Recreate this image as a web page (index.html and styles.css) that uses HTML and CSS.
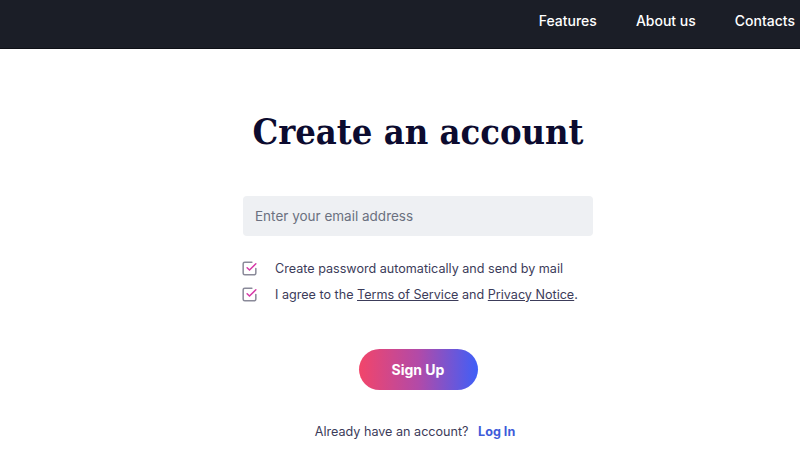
FILE: index.html
```html
<!DOCTYPE html>
<html lang="en">
<head>
<meta charset="utf-8">
<title>Create an account</title>
<link rel="stylesheet" href="styles.css">
</head>
<body>
<header class="nav">
  <a class="nav-link" href="#">Features</a>
  <a class="nav-link" href="#">About us</a>
  <a class="nav-link" href="#">Contacts</a>
</header>
<main class="main">
  <h1 class="title">Create an account</h1>
  <form class="form">
    <input class="email" type="email" placeholder="Enter your email address">
    <ul class="checks">
      <li class="check">
        <svg class="check-icon" viewBox="0 0 24 24" width="19" height="19" fill="none" stroke-linecap="round" stroke-linejoin="round">
          <path d="M20 12v6a2 2 0 0 1 -2 2h-12a2 2 0 0 1 -2 -2v-12a2 2 0 0 1 2 -2h9" stroke="#8a8a99" stroke-width="1.9"/>
          <path d="M9 11l3 3l8 -8" stroke="#d63aa8" stroke-width="1.9"/>
        </svg>
        <span>Create password automatically and send by mail</span>
      </li>
      <li class="check">
        <svg class="check-icon" viewBox="0 0 24 24" width="19" height="19" fill="none" stroke-linecap="round" stroke-linejoin="round">
          <path d="M20 12v6a2 2 0 0 1 -2 2h-12a2 2 0 0 1 -2 -2v-12a2 2 0 0 1 2 -2h9" stroke="#8a8a99" stroke-width="1.9"/>
          <path d="M9 11l3 3l8 -8" stroke="#d63aa8" stroke-width="1.9"/>
        </svg>
        <span>I agree to the <a class="ulink" href="#">Terms of Service</a> and <a class="ulink" href="#">Privacy Notice</a>.</span>
      </li>
    </ul>
    <button class="signup" type="button">Sign Up</button>
    <p class="login">Already have an account? <a class="login-link" href="#">Log In</a></p>
  </form>
</main>
</body>
</html>
```
FILE: styles.css
```css
* { box-sizing: border-box; }
html, body { margin: 0; padding: 0; }
body {
  font-family: Inter, "Noto Sans", sans-serif;
  background: #ffffff;
  color: #3b3b55;
}
.nav {
  height: 49px;
  background: #1b1e27;
  border-bottom: 1px solid #0e1016;
  display: flex;
  justify-content: flex-end;
  align-items: center;
  gap: 39px;
  padding-right: 5px;
}
.nav-link {
  color: #ffffff;
  text-decoration: none;
  font-size: 14px;
  font-weight: 500;
  padding-bottom: 7px;
}
.main {
  display: flex;
  flex-direction: column;
  align-items: center;
  padding-left: 36px;
}
.title {
  font-family: "DejaVu Serif Condensed", "DejaVu Serif", serif;
  font-stretch: condensed;
  font-weight: bold;
  font-size: 36px;
  color: #0c0b2f;
  margin: 58px 0 0;
  line-height: 48px;
}
.form {
  display: flex;
  flex-direction: column;
  align-items: center;
  margin-top: 41px;
}
.email {
  width: 350px;
  height: 40px;
  border: none;
  border-radius: 4px;
  background: #eef0f3;
  padding: 0 12px;
  font-family: Inter, sans-serif;
  font-size: 13.5px;
  color: #333;
}
.email::placeholder { color: #6b7080; }
.checks {
  list-style: none;
  margin: 23px 0 0;
  padding: 0;
  width: 352px;
  margin-left: -4px;
  display: flex;
  flex-direction: column;
  gap: 7px;
}
.check {
  display: flex;
  align-items: center;
  gap: 16px;
  font-size: 12.6px;
  color: #3c3c5a;
  height: 19px;
}
.check-icon { flex: none; }
.ulink { color: #3c3c5a; text-decoration: underline; }
.signup {
  margin-top: 45px;
  width: 119px;
  height: 41px;
  border: none;
  border-radius: 21px;
  background: linear-gradient(90deg, #f2456a 0%, #b24aa8 50%, #3e5ff8 100%);
  color: #ffffff;
  font-family: Inter, sans-serif;
  font-weight: 700;
  font-size: 14px;
}
.login {
  margin: 34px 0 0;
  font-size: 12.6px;
  color: #3c3c5a;
  margin-right: 6px;
}
.login-link {
  margin-left: 6px;
  color: #3f5bd9;
  font-weight: 700;
  text-decoration: none;
}
```
